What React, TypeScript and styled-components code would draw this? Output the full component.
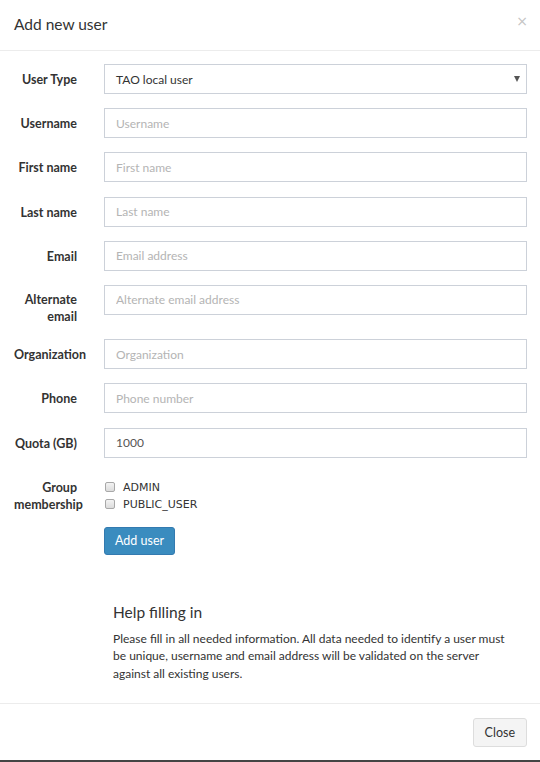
import React from "react";
import styled, { createGlobalStyle } from "styled-components";

const Global = createGlobalStyle`
  html, body { margin: 0; padding: 0; background: #444; }
  body { font-family: Lato, "Open Sans", sans-serif; color: #333; }
  * { box-sizing: border-box; }
`;

const Modal = styled.div`
  width: 540px;
  height: 760px;
  background: #fff;
  display: flex;
  flex-direction: column;
`;

const Header = styled.div`
  height: 51px;
  border-bottom: 1px solid #ececec;
  display: flex;
  align-items: center;
  justify-content: space-between;
  padding: 0 14px 2px 14px;
`;

const Title = styled.h4`
  margin: 0;
  font-weight: 400;
  font-size: 15.5px;
  color: #333;
`;

const CloseX = styled.span`
  color: #c4c4c4;
  font-size: 14px;
  font-family: "DejaVu Sans", sans-serif;
  margin-top: -6px;
  margin-right: -2px;
`;

const Body = styled.div`
  flex: 1;
  padding: 13px 13px 0 14px;
`;

const Form = styled.form`
  display: flex;
  flex-direction: column;
  gap: 14.2px;
`;

const Row = styled.div`
  display: grid;
  grid-template-columns: 63px 423px;
  column-gap: 27px;
  align-items: start;
`;

const Label = styled.label<{ $tall?: boolean }>`
  display: block;
  text-align: right;
  font-weight: 700;
  font-size: 12.5px;
  line-height: 17px;
  padding-top: ${(p) => (p.$tall ? "6px" : "7px")};
  color: #333;
  white-space: nowrap;
`;

const WrapLabel = styled(Label)`
  white-space: normal;
`;

const Input = styled.input`
  width: 100%;
  height: 30px;
  border: 1px solid #ccd1d9;
  border-radius: 0;
  padding: 0 11px;
  font-family: Lato, sans-serif;
  font-size: 12px;
  color: #555;
  outline: none;
  &::placeholder { color: #b4b4b4; }
`;

const SelectBox = styled.div`
  position: relative;
  height: 30px;
  border: 1px solid #ccd1d9;
  display: flex;
  align-items: center;
  padding: 0 11px;
  font-size: 12px;
  color: #333;
`;

const Arrow = styled.span`
  position: absolute;
  right: 6px;
  top: 11px;
  width: 0;
  height: 0;
  border-left: 3.5px solid transparent;
  border-right: 3.5px solid transparent;
  border-top: 6px solid #555;
`;

const Checks = styled.div`
  padding-top: 7px;
  display: flex;
  flex-direction: column;
`;

const CheckRow = styled.label`
  display: flex;
  align-items: center;
  height: 17px;
  font-family: "DejaVu Sans", sans-serif;
  font-size: 11px;
  color: #333;
`;

const Box = styled.span`
  width: 10px;
  height: 10px;
  border: 1px solid #a8a8a8;
  border-radius: 2px;
  background: linear-gradient(#f3f3f3, #dcdcdc);
  margin: 0 8px 0 1px;
`;

const Button = styled.button`
  height: 28px;
  padding: 0 10px;
  background: #3a8cbf;
  color: #fff;
  border: 1px solid #337ab0;
  border-radius: 3px;
  font-family: Lato, sans-serif;
  font-size: 12.5px;
  justify-self: start;
`;

const Help = styled.div`
  margin: 47px 0 0 99px;
  padding-right: 20px;
`;

const HelpTitle = styled.h4`
  margin: 0 0 8px 0;
  font-weight: 400;
  font-size: 15.5px;
  line-height: 20px;
  color: #333;
`;

const HelpText = styled.p`
  margin: 0;
  font-size: 12px;
  line-height: 17.5px;
  color: #333;
`;

const Footer = styled.div`
  border-top: 1px solid #ececec;
  height: 57px;
  display: flex;
  justify-content: flex-end;
  align-items: flex-start;
  padding: 14px 13px 0 0;
`;

const DefaultButton = styled.button`
  height: 29px;
  padding: 0 11px;
  background: #f4f4f4;
  border: 1px solid #ddd;
  border-radius: 3px;
  font-family: Lato, sans-serif;
  font-size: 12.5px;
  color: #333;
`;

const fields: { label: string; placeholder?: string; value?: string; tall?: boolean }[] = [
  { label: "Username", placeholder: "Username" },
  { label: "First name", placeholder: "First name" },
  { label: "Last name", placeholder: "Last name" },
  { label: "Email", placeholder: "Email address" },
  { label: "Alternate email", placeholder: "Alternate email address", tall: true },
  { label: "Organization", placeholder: "Organization" },
  { label: "Phone", placeholder: "Phone number" },
  { label: "Quota (GB)", value: "1000" },
];

export default function App() {
  return (
    <>
      <Global />
      <Modal>
        <Header>
          <Title>Add new user</Title>
          <CloseX>×</CloseX>
        </Header>
        <Body>
          <Form>
            <Row>
              <Label>User Type</Label>
              <SelectBox>
                TAO local user
                <Arrow />
              </SelectBox>
            </Row>
            {fields.map((f) => (
              <Row key={f.label}>
                {f.tall ? (
                  <WrapLabel $tall>{f.label}</WrapLabel>
                ) : (
                  <Label>{f.label}</Label>
                )}
                <Input placeholder={f.placeholder} defaultValue={f.value} />
              </Row>
            ))}
            <Row>
              <WrapLabel>Group membership</WrapLabel>
              <Checks>
                <CheckRow>
                  <Box />
                  ADMIN
                </CheckRow>
                <CheckRow>
                  <Box />
                  PUBLIC_USER
                </CheckRow>
              </Checks>
            </Row>
            <Row>
              <span />
              <Button type="button">Add user</Button>
            </Row>
          </Form>
          <Help>
            <HelpTitle>Help filling in</HelpTitle>
            <HelpText>
              Please fill in all needed information. All data needed to identify a user must
              be unique, username and email address will be validated on the server against
              all existing users.
            </HelpText>
          </Help>
        </Body>
        <Footer>
          <DefaultButton type="button">Close</DefaultButton>
        </Footer>
      </Modal>
    </>
  );
}
